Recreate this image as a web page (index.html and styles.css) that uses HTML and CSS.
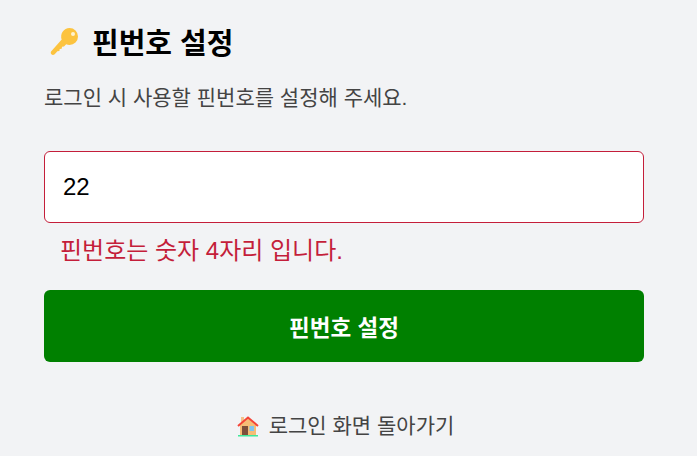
FILE: index.html
```html
<!DOCTYPE html>
<html lang="ko">

<head>
  <meta charset="UTF-8">
  <title>핀번호 설정</title>
  <link rel="stylesheet" href="styles.css">
</head>

<body>
  <div class="contenedor">
    <h1 class="titulo">
      <svg class="icono-llave" viewBox="0 0 32 32" width="32" height="32">
        <path fill="#fcc33f" d="M21.5 3a8.500 8.500 0 0 1 0 17c-1.200 0-2.300-.2-3.300-.7L16 21.500l-2 .2-.3 2-2 .3-.3 2-2 .3-2.700 2.900c-1 1-2.400 1-3.300.1-.9-.9-.9-2.300.1-3.300L13.700 14.500A8.500 8.500 0 0 1 21.500 3z"/>
        <circle cx="25" cy="9" r="2" fill="#fff3cf"/>
      </svg>
      <span>핀번호 설정</span>
    </h1>
    <p class="descripcion">로그인 시 사용할 핀번호를 설정해 주세요.</p>
    <input class="campo" type="text" value="22">
    <p class="error">핀번호는 숫자 4자리 입니다.</p>
    <button class="boton" type="button">핀번호 설정</button>
    <a class="volver" href="#">
      <svg class="icono-casa" viewBox="0 0 22 22" width="22" height="22">
        <rect x="4" y="2" width="3" height="8" fill="#f4c28a"/>
        <path fill="#f6bd76" d="M3 10 11 3l8 7v10H3z"/>
        <path fill="none" stroke="#f44336" stroke-width="2" d="M1 11 11 2.500 21 11"/>
        <rect x="5" y="11" width="6" height="9" fill="#7d4f3a"/>
        <rect x="12.500" y="11" width="4.500" height="5" fill="#7fc4ee"/>
        <rect x="1" y="20" width="20" height="1.500" fill="#3fe89a"/>
      </svg>
      <span>로그인 화면 돌아가기</span>
    </a>
  </div>
</body>

</html>
```

FILE: styles.css
```css
body {
  margin: 0;
  background-color: #f2f3f5;
  font-family: "Liberation Sans", "Noto Sans CJK KR", sans-serif;
}

.contenedor {
  width: 600px;
  margin-left: 44px;
  display: flex;
  flex-direction: column;
}

.titulo {
  margin: 21px 0 0;
  height: 40px;
  padding-left: 4px;
  display: flex;
  align-items: center;
  gap: 12px;
  font-size: 29px;
  font-weight: bold;
  color: #000;
}

.descripcion {
  margin: 22px 0 0;
  font-size: 21px;
  line-height: 30px;
  color: #444;
}

.campo {
  margin-top: 38px;
  height: 72px;
  box-sizing: border-box;
  padding: 0 18px;
  border: 1px solid #c41e3a;
  border-radius: 6px;
  background-color: #fff;
  font-family: inherit;
  font-size: 24px;
  color: #000;
  outline: none;
}

.error {
  margin: 12px 0 0;
  padding-left: 16px;
  font-size: 24px;
  line-height: 32px;
  color: #c41e3a;
}

.boton {
  margin-top: 23px;
  height: 72px;
  border: none;
  border-radius: 6px;
  background-color: #008000;
  font-family: inherit;
  font-size: 22.5px;
  font-weight: bold;
  color: #fff;
}

.volver {
  margin-top: 48px;
  padding-left: 3px;
  display: flex;
  justify-content: center;
  align-items: center;
  gap: 10px;
  font-size: 21px;
  line-height: 32px;
  color: #444;
  text-decoration: none;
}

.icono-llave,
.icono-casa {
  flex: none;
}
```
